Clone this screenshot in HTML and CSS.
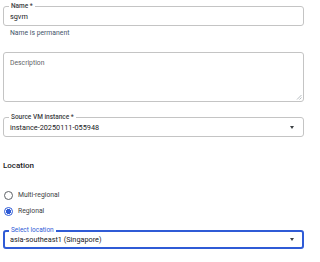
FILE: index.html
```html
<!DOCTYPE html>
<html lang="en">
<head>
  <meta charset="UTF-8">
  <meta name="viewport" content="width=device-width, initial-scale=1.0">
  <title>Create machine image</title>
  <link rel="stylesheet" href="styles.css">
</head>
<body>
  <div class="form">
    <div class="field field-name">
      <span class="field-label">Name *</span>
      <span class="field-value">sgvm</span>
    </div>
    <div class="hint">Name is permanent</div>

    <div class="field field-area">
      <span class="placeholder">Description</span>
      <svg class="grip" width="6" height="6" viewBox="0 0 6 6">
        <path d="M5.5 1 L1 5.5 M5.5 3.5 L3.5 5.5" stroke="#9aa0a6" stroke-width="0.7" fill="none"/>
      </svg>
    </div>

    <div class="field field-select field-vm">
      <span class="field-label">Source VM instance *</span>
      <span class="field-value">instance-20250111-055948</span>
      <span class="caret"></span>
    </div>

    <h3 class="section">Location</h3>

    <label class="radio-row radio-first">
      <span class="radio"></span>
      <span>Multi-regional</span>
    </label>
    <label class="radio-row">
      <span class="radio checked"></span>
      <span>Regional</span>
    </label>

    <div class="field field-select field-focus">
      <span class="field-label">Select location</span>
      <span class="field-value">asia-southeast1 (Singapore)</span>
      <span class="caret"></span>
    </div>
  </div>
</body>
</html>
```

FILE: styles.css
```css
body {
  margin: 0;
  padding: 0;
  background: #fff;
  font-family: Roboto, 'Noto Sans', sans-serif;
  color: #202124;
}
.form {
  width: 301px;
  padding: 6px 0 0 3px;
}
.field {
  position: relative;
  box-sizing: border-box;
  height: 20px;
  border: 1px solid #c4c4c4;
  border-radius: 3px;
  display: flex;
  align-items: center;
  padding: 0 6px;
}
.field-label {
  position: absolute;
  top: -5px;
  left: 5px;
  padding: 0 2px;
  background: #fff;
  font-size: 6.5px;
  line-height: 8px;
  font-weight: 500;
  color: #3c4043;
}
.field-value {
  font-size: 7.3px;
  line-height: 10px;
  padding-top: 1px;
}
.hint {
  margin-top: 3px;
  padding-left: 7px;
  font-size: 6.8px;
  line-height: 8px;
  color: #44546a;
}
.field-area {
  margin-top: 15px;
  height: 50px;
  align-items: flex-start;
  padding-top: 6px;
}
.placeholder {
  font-size: 6.8px;
  line-height: 8px;
  color: #5f6368;
}
.grip {
  position: absolute;
  right: 1px;
  bottom: 1px;
}
.field-vm {
  margin-top: 15px;
}
.field-select {
  justify-content: space-between;
  padding-right: 9px;
}
.caret {
  width: 0;
  height: 0;
  border-left: 2.5px solid transparent;
  border-right: 2.5px solid transparent;
  border-top: 3px solid #3c4043;
}
.section {
  margin: 24px 0 0;
  font-size: 8px;
  line-height: 10px;
  font-weight: 500;
  color: #202124;
}
.radio-row {
  display: flex;
  align-items: center;
  gap: 5px;
  height: 16px;
  font-size: 6.8px;
  color: #3c4043;
}
.radio-first {
  margin-top: 16px;
}
.radio {
  box-sizing: border-box;
  width: 9px;
  height: 9px;
  margin-left: 1px;
  border: 1px solid #5f6368;
  border-radius: 50%;
}
.radio.checked {
  border-color: #2f5bd6;
  background: radial-gradient(circle, #2f5bd6 0 2.3px, #fff 2.6px);
}
.field-focus {
  margin-top: 11px;
  height: 19px;
  border: 2px solid #2f5bd6;
  padding-left: 5px;
  padding-right: 8px;
}
.field-focus .field-label {
  top: -6px;
  left: 4px;
  color: #2f5bd6;
  font-weight: 400;
}
```
